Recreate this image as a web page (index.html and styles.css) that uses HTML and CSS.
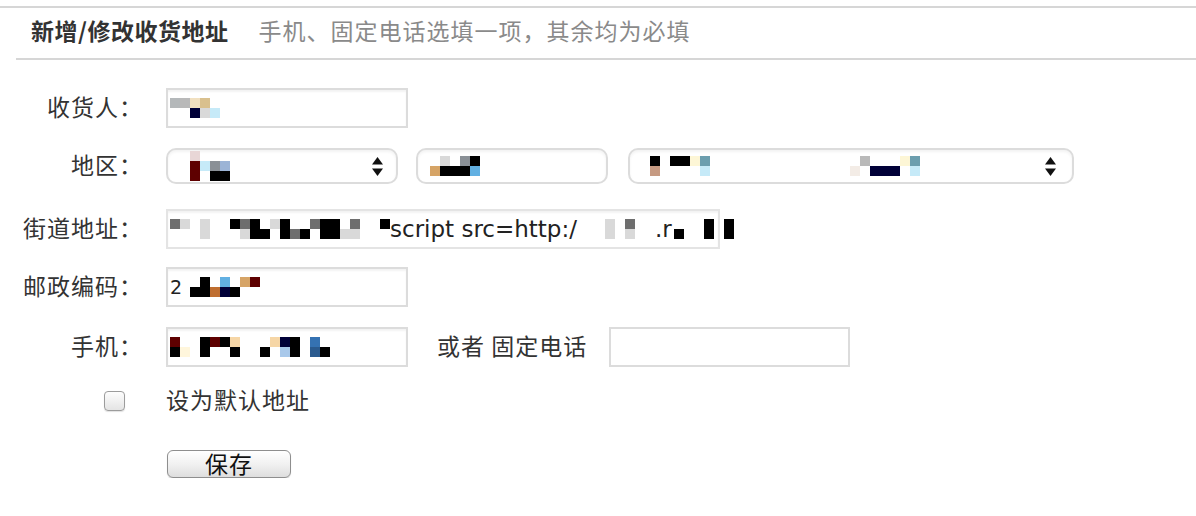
FILE: index.html
```html
<!DOCTYPE html>
<html lang="zh-CN">
<head>
<meta charset="utf-8">
<title>新增/修改收货地址</title>
<link rel="stylesheet" href="styles.css">
</head>
<body>
<div class="top-rule"></div>
<div class="head">
  <span class="title">新增/修改收货地址</span>
  <span class="sub">手机、固定电话选填一项，其余均为必填</span>
</div>

<form class="form">
  <div class="row r-name">
    <label class="label">收货人：</label>
    <div class="field w242">
      <span class="mz">
        <i><b class="g"></b><b class="g2"></b><b class="t"></b><b class="d"></b><b></b></i>
        <i><b></b><b></b><b class="n"></b><b class="l"></b><b class="c"></b></i>
      </span>
    </div>
  </div>

  <div class="row r-region">
    <label class="label">地区：</label>
    <div class="select s1">
      <span class="mz">
        <i><b class="w"></b><b></b><b></b><b></b></i>
        <i><b class="r"></b><b class="c"></b><b class="s"></b><b class="bl"></b></i>
        <i><b class="r"></b><b></b><b class="k"></b><b class="k"></b></i>
      </span>
      <svg class="arrows" width="11" height="19" viewBox="0 0 11 19"><polygon points="5.5,0 11,7.5 0,7.5"/><polygon points="0,11.5 11,11.5 5.5,19"/></svg>
    </div>
    <div class="select s2">
      <span class="mz">
        <i><b></b><b class="l"></b><b></b><b class="s"></b><b class="k"></b></i>
        <i><b class="o"></b><b class="k"></b><b class="k"></b><b class="k"></b><b class="m"></b></i>
      </span>
    </div>
    <div class="select s3">
      <span class="mz">
        <i><b class="k"></b><b></b><b class="k"></b><b class="k"></b><b class="y"></b><b class="q"></b><b></b><b></b><b></b><b></b><b></b><b></b><b></b><b></b><b></b><b></b><b></b><b></b><b></b><b></b><b></b><b class="g2"></b><b></b><b></b><b></b><b class="y"></b><b class="q"></b></i>
        <i><b class="p"></b><b></b><b></b><b></b><b></b><b class="c"></b><b></b><b></b><b></b><b></b><b></b><b></b><b></b><b></b><b></b><b></b><b></b><b></b><b></b><b></b><b class="w2"></b><b></b><b class="n"></b><b class="n"></b><b class="n"></b><b></b><b class="c"></b></i>
      </span>
      <svg class="arrows" width="11" height="19" viewBox="0 0 11 19"><polygon points="5.5,0 11,7.5 0,7.5"/><polygon points="0,11.5 11,11.5 5.5,19"/></svg>
    </div>
  </div>

  <div class="row r-street">
    <label class="label">街道地址：</label>
    <div class="field w554">
      <span class="mz">
        <i><b class="dg"></b><b class="l"></b><b></b><b class="l"></b><b></b><b></b><b class="k"></b><b class="dg"></b><b class="k"></b><b></b><b class="l"></b><b class="k"></b><b></b><b></b><b class="dg"></b><b class="k"></b><b class="k"></b><b></b><b class="dg"></b><b></b><b></b><b class="k"></b></i>
        <i><b></b><b></b><b></b><b class="l"></b><b></b><b></b><b></b><b class="l"></b><b class="k"></b><b class="k"></b><b></b><b class="k"></b><b class="dg"></b><b class="k"></b><b></b><b class="k"></b><b class="k"></b><b class="l"></b><b class="l"></b><b></b><b></b><b></b></i>
      </span>
      <span class="val">script src=http:/</span>
      <span class="mz gap">
        <i><b></b><b class="l"></b><b></b><b class="dg"></b></i>
        <i><b></b><b class="l"></b><b></b><b class="l"></b></i>
      </span>
      <span class="val dot">.r</span>
      <span class="mz">
        <i><b></b><b></b><b></b><b class="k"></b><b></b><b class="k"></b></i>
        <i><b class="k"></b><b></b><b></b><b class="k"></b><b></b><b class="k"></b></i>
      </span>
    </div>
  </div>

  <div class="row r-zip">
    <label class="label">邮政编码：</label>
    <div class="field w242">
      <span class="val two">2</span>
      <span class="mz">
        <i><b></b><b></b><b class="k"></b><b></b><b class="m"></b><b></b><b class="o"></b><b class="r"></b></i>
        <i><b></b><b class="k"></b><b class="k"></b><b class="br"></b><b class="n"></b><b class="k"></b><b></b><b></b></i>
      </span>
    </div>
  </div>

  <div class="row r-phone">
    <label class="label">手机：</label>
    <div class="field w242">
      <span class="mz">
        <i><b class="r"></b><b></b><b></b><b class="k"></b><b class="r"></b><b class="k"></b><b class="pe"></b><b></b><b></b><b></b><b class="pe"></b><b class="n"></b><b class="k"></b><b></b><b class="u"></b><b></b></i>
        <i><b class="k"></b><b class="cr"></b><b></b><b class="k"></b><b></b><b></b><b class="k"></b><b></b><b></b><b class="k"></b><b></b><b class="lb"></b><b class="k"></b><b></b><b class="du"></b><b class="k"></b></i>
      </span>
    </div>
    <span class="or">或者 固定电话</span>
    <div class="field flat w241"></div>
  </div>

  <div class="row r-default">
    <div class="label check-cell"><span class="checkbox"></span></div>
    <span class="text">设为默认地址</span>
  </div>

  <div class="row r-save">
    <div class="label"></div>
    <button type="button" class="btn">保存</button>
  </div>
</form>
</body>
</html>
```
FILE: styles.css
```css
* { box-sizing: border-box; }

body {
  margin: 0;
  background: #fff;
  color: #333;
  font-family: "Noto Sans CJK SC", "Noto Sans", sans-serif;
  font-size: 23px;
  letter-spacing: 1px;
}

.top-rule {
  height: 2px;
  margin-top: 6px;
  background: #d6d6d6;
}

.head {
  height: 52px;
  margin-left: 16px;
  padding-left: 15px;
  padding-bottom: 5px;
  border-bottom: 2px solid #d6d6d6;
  display: flex;
  align-items: center;
  line-height: 1;
}

.title {
  font-weight: 700;
  color: #333;
  letter-spacing: 0.5px;
}

.sub {
  margin-left: 30px;
  color: #8a8a8a;
}

.form {
  padding-top: 28px;
}

.row {
  display: flex;
  align-items: center;
  height: 40px;
  line-height: 1;
}

.r-region { margin-top: 18px; }
.r-street { margin-top: 23px; }
.r-zip { margin-top: 18px; }
.r-phone { margin-top: 20px; }
.r-default { margin-top: 14px; }
.r-save { margin-top: 29px; height: 28px; }

.label,
.or,
.text {
  padding-bottom: 4px;
}

.label {
  flex: none;
  width: 143px;
  margin-right: 23px;
  text-align: right;
  color: #333;
}

.field {
  height: 40px;
  border: 2px solid #dcdcdc;
  box-shadow: inset 0 2px 2px rgba(0, 0, 0, 0.05);
  background: #fff;
  display: flex;
  align-items: center;
  padding-left: 2px;
  letter-spacing: 0;
}

.field.flat { box-shadow: none; }

.w242 { width: 242px; }
.w241 { width: 241px; }
.w554 { width: 554px; border-color: #e4e4e4; }

.select {
  height: 36px;
  border: 2px solid #dcdcdc;
  border-radius: 10px;
  box-shadow: inset 0 2px 3px rgba(0, 0, 0, 0.05);
  display: flex;
  align-items: center;
  justify-content: space-between;
  padding-right: 13px;
  background: #fff;
}

.s1 { width: 232px; padding-left: 22px; }
.s2 { width: 192px; padding-left: 12px; margin-left: 18px; }
.s3 { width: 446px; padding-left: 20px; margin-left: 20px; padding-right: 16px; }

.arrows { fill: #111; flex: none; }

/* pixelated (masked) user data */
.mz {
  display: inline-flex;
  flex-direction: column;
  flex: none;
}
.mz i { display: flex; }
.mz b { width: 10px; height: 10px; }
.mz.gap { margin-left: 18px; }

.mz .k { background: #000; }
.mz .r { background: #5e0000; }
.mz .n { background: #000038; }
.mz .g { background: #b4b8ba; }
.mz .g2 { background: #b9b9b9; }
.mz .dg { background: #6e6e6e; }
.mz .l { background: #d9d9d9; }
.mz .t { background: #f1e0c0; }
.mz .d { background: #d9c08e; }
.mz .c { background: #c6eaf8; }
.mz .s { background: #8a9096; }
.mz .bl { background: #9cb4d6; }
.mz .w { background: #e8d6d6; }
.mz .w2 { background: #f3ece6; }
.mz .o { background: #d6a466; }
.mz .m { background: #62b0e2; }
.mz .p { background: #c69a82; }
.mz .y { background: #fdf6d6; }
.mz .q { background: #6c9eae; }
.mz .br { background: #bf6e30; }
.mz .pe { background: #f6d6a6; }
.mz .cr { background: #fff6dc; }
.mz .u { background: #3572b2; }
.mz .du { background: #2a5a8e; }
.mz .lb { background: #a8c8ea; }

.val {
  font-family: "DejaVu Sans", "Liberation Sans", sans-serif;
  font-size: 23px;
  color: #222;
  flex: none;
}
.val.dot { margin-left: 20px; margin-right: 2px; }
.val.two { font-size: 19px; margin-right: -2px; }

.or {
  margin-left: 29px;
  margin-right: 22px;
  color: #333;
}

.check-cell {
  display: flex;
  justify-content: flex-end;
  padding-right: 18px;
  padding-bottom: 0;
}

.checkbox {
  width: 21px;
  height: 20px;
  border: 1px solid #9c9c9c;
  border-radius: 4px;
  background: linear-gradient(#fdfdfd, #e4e4e4);
  box-shadow: 0 1px 1px rgba(0, 0, 0, 0.12);
}

.text { color: #333; }

.btn {
  width: 124px;
  height: 28px;
  margin-left: 1px;
  padding: 0 0 2px;
  border: 1px solid #8e8e8e;
  border-radius: 6px;
  background: linear-gradient(#ffffff, #f1f1f1 50%, #dedede);
  box-shadow: 0 1px 1px rgba(0, 0, 0, 0.15);
  font-family: "Noto Sans CJK SC", sans-serif;
  font-size: 23px;
  letter-spacing: 1px;
  line-height: 24px;
  color: #111;
}
```
